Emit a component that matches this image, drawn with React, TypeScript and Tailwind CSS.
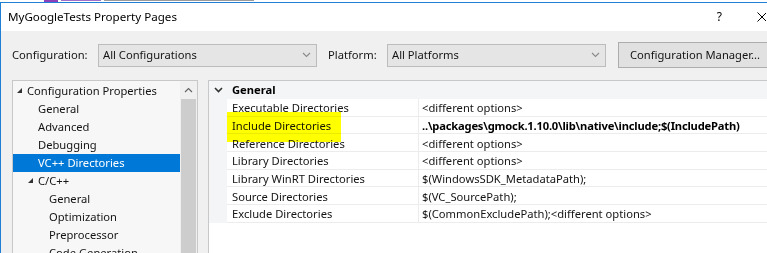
const tree = [
  { label: 'Configuration Properties', level: 0, expander: true },
  { label: 'General', level: 1 },
  { label: 'Advanced', level: 1 },
  { label: 'Debugging', level: 1 },
  { label: 'VC++ Directories', level: 1, selected: true },
  { label: 'C/C++', level: 1, expander: true },
  { label: 'General', level: 2 },
  { label: 'Optimization', level: 2 },
  { label: 'Preprocessor', level: 2 },
  { label: 'Code Generation', level: 2 },
]

const indent = ['pl-[4px]', 'pl-[15px]', 'pl-[26px]']

const props = [
  { name: 'Executable Directories', value: '<different options>' },
  { name: 'Include Directories', value: '..\\packages\\gmock.1.10.0\\lib\\native\\include;$(IncludePath)', bold: true },
  { name: 'Reference Directories', value: '<different options>' },
  { name: 'Library Directories', value: '<different options>' },
  { name: 'Library WinRT Directories', value: '$(WindowsSDK_MetadataPath);' },
  { name: 'Source Directories', value: '$(VC_SourcePath);' },
  { name: 'Exclude Directories', value: '$(CommonExcludePath);<different options>' },
]

function Chevron({ up = false, className = '' }: { up?: boolean; className?: string }) {
  return (
    <svg width="9" height="6" viewBox="0 0 9 6" className={className}>
      <polyline
        points={up ? '1,5 4.5,1.5 8,5' : '1,1 4.5,4.5 8,1'}
        fill="none"
        stroke="currentColor"
        strokeWidth="1.1"
      />
    </svg>
  )
}

function Combo({ text }: { text: string }) {
  return (
    <div className="flex h-[23px] w-[219px] shrink-0 items-center justify-between border border-[#bcbcbc] bg-[#e5e5e5] pl-[4px] pr-[5px]">
      <span>{text}</span>
      <Chevron className="text-[#8a8a8a]" />
    </div>
  )
}

export default function App() {
  return (
    <div className="h-[253px] w-[767px] overflow-hidden bg-white font-['Noto_Sans',sans-serif] text-[11.2px] leading-none text-[#141414]">
      {/* window behind, peeking above */}
      <div className="flex h-[2px] items-start gap-[3px] pl-[44px]">
        <span className="h-[2px] w-[14px] bg-[#8b3fb8]" />
        <span className="h-[1px] w-[40px] bg-[#a070c8]" />
        <span className="h-[1px] w-[150px] bg-[#9a9a9a]" />
      </div>

      <div className="flex h-[251px] flex-col border-l border-t border-[#1f7fd4]">
        <div className="flex h-[28px] shrink-0 items-center justify-between pl-[7px] pr-[1px]">
          <span className="text-[11.6px] text-black">MyGoogleTests Property Pages</span>
          <div className="flex items-center gap-[35px] text-black">
            <span className="text-[12px]">?</span>
            <svg width="9" height="10" viewBox="0 0 9 10">
              <path d="M0.5 0.5 L9.5 9.5 M9.5 0.5 L0.5 9.5" stroke="black" strokeWidth="1" />
            </svg>
          </div>
        </div>

        <div className="flex flex-1 flex-col bg-[#f0f0f0] pl-[11px]">
          <div className="mt-[11px] flex h-[26px] shrink-0 items-center">
            <span className="w-[86px] shrink-0">Configuration:</span>
            <Combo text="All Configurations" />
            <span className="ml-[11px] w-[59px] shrink-0">Platform:</span>
            <Combo text="All Platforms" />
            <div className="ml-[12px] flex h-[26px] w-[160px] shrink-0 items-center border border-[#adadad] bg-[#e1e1e1] pl-[11px]">
              Configuration Manager...
            </div>
          </div>

          <div className="mt-[12px] flex min-h-0 flex-1">
            {/* tree */}
            <div className="flex w-[186px] shrink-0 border-l border-r border-t border-[#c8c8c8] bg-[#f7f7f7]">
              <div className="flex flex-1 flex-col pt-[1px]">
                {tree.map((item, i) => (
                  <div
                    key={i}
                    className={`flex h-[18px] shrink-0 items-center ${indent[item.level]} ${
                      item.selected ? 'bg-[#0078d7] text-white' : ''
                    }`}
                  >
                    <span className="flex w-[10px] shrink-0 items-center">
                      {item.expander && (
                        <svg width="5" height="5" viewBox="0 0 5 5" className="mb-[1px]">
                          <polygon points="5,0 5,5 0,5" fill="#333" />
                        </svg>
                      )}
                    </span>
                    <span>{item.label}</span>
                  </div>
                ))}
              </div>
              <div className="flex w-[17px] shrink-0 flex-col bg-[#f0f0f0]">
                <div className="flex h-[18px] items-center justify-center text-[#606060]">
                  <Chevron up />
                </div>
                <div className="ml-[1px] mr-[1px] flex-1 bg-[#cdcdcd]" />
              </div>
            </div>

            {/* property grid */}
            <div className="relative ml-[10px] flex flex-1 flex-col border-l border-t border-[#c8c8c8] bg-white">
              <div className="flex h-[18px] shrink-0 items-center bg-[#f4f5f7]">
                <span className="flex w-[18px] justify-center text-[#333]">
                  <svg width="9" height="6" viewBox="0 0 9 6">
                    <polyline points="1,1 4.5,4.5 8,1" fill="none" stroke="currentColor" strokeWidth="1.6" />
                  </svg>
                </span>
                <span className="pl-[5px] font-bold text-black">General</span>
              </div>
              {props.map((p) => (
                <div key={p.name} className="flex h-[17.7px] shrink-0">
                  <div className="w-[18px] shrink-0 bg-[#f4f5f7]" />
                  <div className="flex w-[191px] shrink-0 items-center border-b border-[#ececec] pl-[5px] pt-[1px]">
                    {p.name}
                  </div>
                  <div
                    className={`flex flex-1 items-center whitespace-nowrap border-b border-l border-[#ececec] pl-[3px] pt-[1px] ${
                      p.bold ? 'font-bold tracking-[-0.2px] text-black' : ''
                    }`}
                  >
                    {p.value}
                  </div>
                </div>
              ))}
              {/* marker highlight */}
              <div className="pointer-events-none absolute left-[18px] top-[31px] h-[30px] w-[114px] bg-[#ffff00] mix-blend-multiply" />
            </div>
          </div>
        </div>
      </div>
    </div>
  )
}
